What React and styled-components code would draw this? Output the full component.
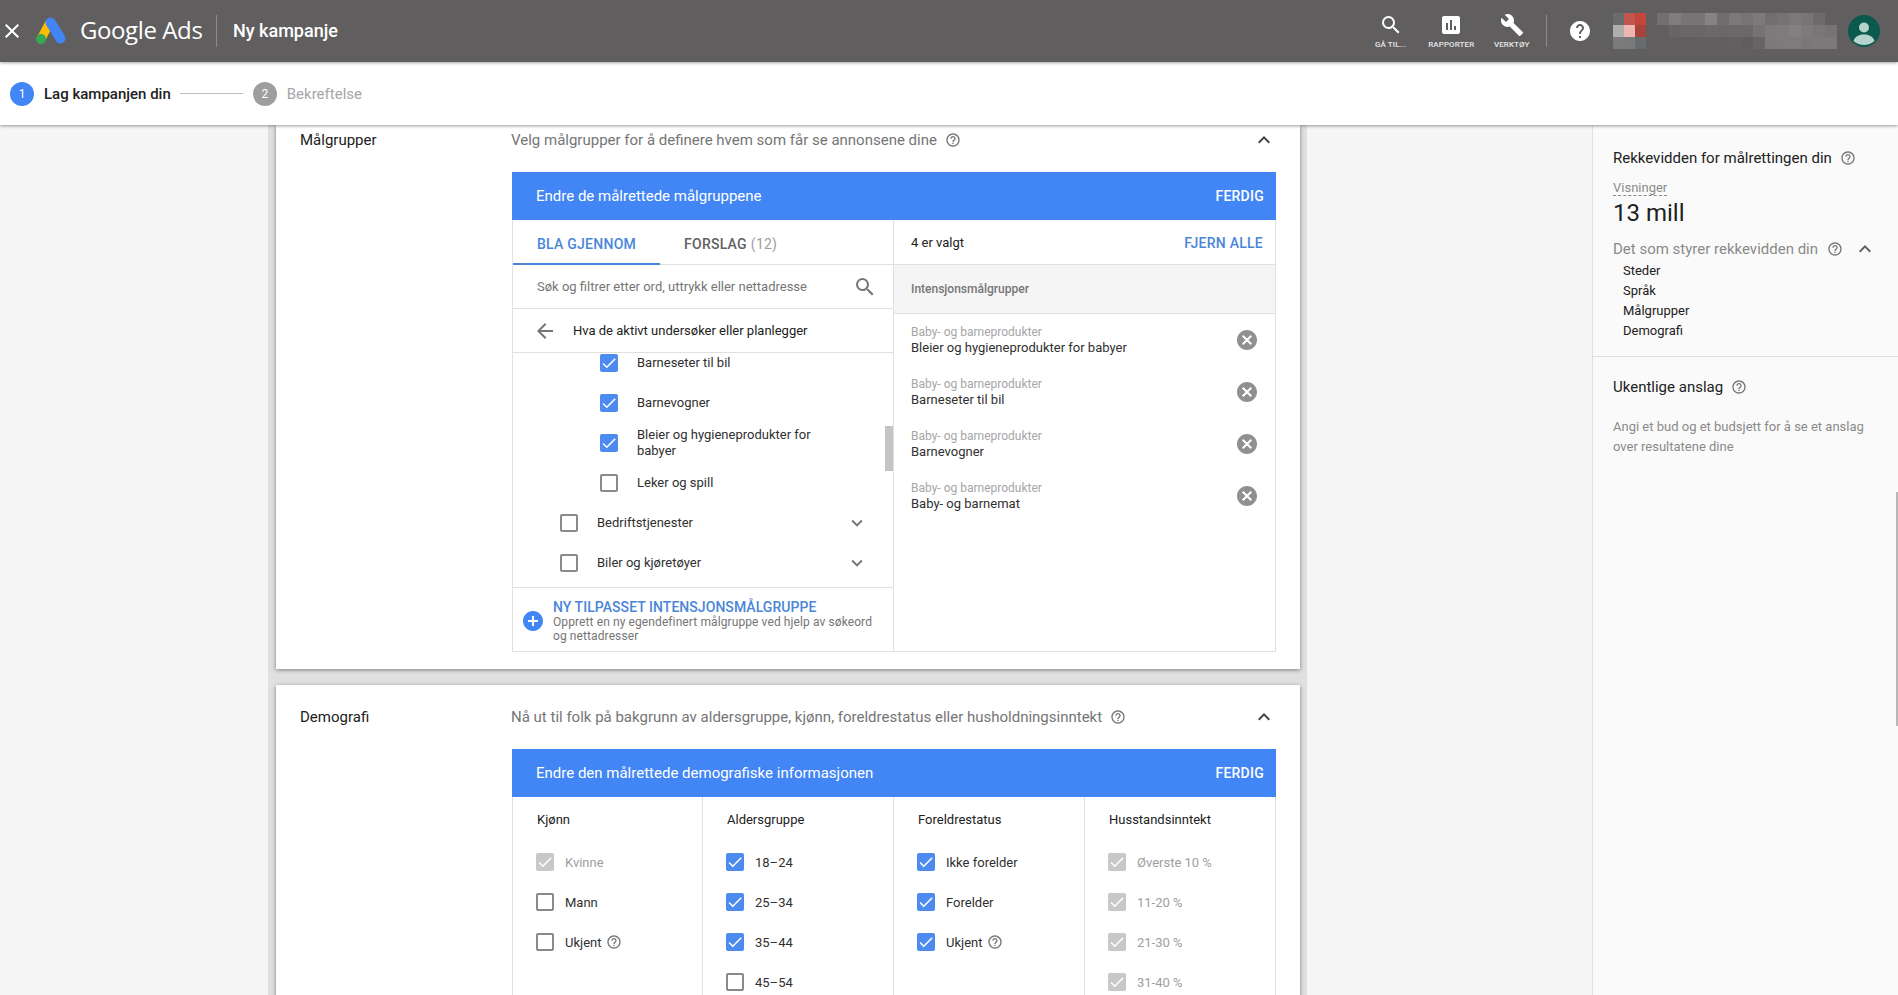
import React from "react";
import styled, { createGlobalStyle } from "styled-components";

const GlobalStyle = createGlobalStyle`
    * { box-sizing: border-box; }
    html, body { margin: 0; height: 100%; overflow: hidden; }
    body {
        font-family: Roboto, "Liberation Sans", sans-serif;
        color: #212121;
        background: #f5f5f5;
    }
`;

const paths = {
    search: "M15.5 14h-.79l-.28-.27A6.471 6.471 0 0 0 16 9.5 6.5 6.5 0 1 0 9.5 16c1.61 0 3.09-.59 4.23-1.57l.27.28v.79l5 4.99L20.49 19l-4.99-5zm-6 0C7.01 14 5 11.99 5 9.5S7.01 5 9.5 5 14 7.01 14 9.5 11.99 14 9.5 14z",
    report: "M19 3H5c-1.1 0-2 .9-2 2v14c0 1.1.9 2 2 2h14c1.1 0 2-.9 2-2V5c0-1.1-.9-2-2-2zM9 17H7v-7h2v7zm4 0h-2V7h2v10zm4 0h-2v-4h2v4z",
    build: "M22.7 19l-9.1-9.1c.9-2.3.4-5-1.5-6.9-2-2-5-2.4-7.4-1.3L9 6 6 9 1.6 4.7C.4 7.1.9 10.1 2.9 12.1c1.9 1.9 4.6 2.4 6.9 1.5l9.1 9.1c.4.4 1 .4 1.4 0l2.3-2.3c.5-.4.5-1.1.1-1.4z",
    helpFilled: "M12 2C6.48 2 2 6.48 2 12s4.48 10 10 10 10-4.48 10-10S17.52 2 12 2zm1 17h-2v-2h2v2zm2.07-7.75l-.9.92C13.45 12.9 13 13.5 13 15h-2v-.5c0-1.1.45-2.1 1.17-2.83l1.24-1.26c.37-.36.59-.86.59-1.41 0-1.1-.9-2-2-2s-2 .9-2 2H8c0-2.21 1.79-4 4-4s4 1.79 4 4c0 .88-.36 1.68-.93 2.25z",
    help: "M11 18h2v-2h-2v2zm1-16C6.48 2 2 6.48 2 12s4.48 10 10 10 10-4.48 10-10S17.52 2 12 2zm0 18c-4.41 0-8-3.59-8-8s3.59-8 8-8 8 3.59 8 8-3.59 8-8 8zm0-14c-2.21 0-4 1.79-4 4h2c0-1.1.9-2 2-2s2 .9 2 2c0 2-3 1.75-3 5h2c0-2.25 3-2.5 3-5 0-2.21-1.79-4-4-4z",
    close: "M19 6.41L17.59 5 12 10.59 6.41 5 5 6.41 10.59 12 5 17.59 6.41 19 12 13.41 17.59 19 19 17.59 13.41 12z",
    back: "M20 11H7.83l5.59-5.59L12 4l-8 8 8 8 1.41-1.41L7.83 13H20v-2z",
    less: "M12 8l-6 6 1.41 1.41L12 10.83l4.59 4.58L18 14z",
    more: "M16.59 8.59L12 13.17 7.41 8.59 6 10l6 6 6-6z",
    check: "M9 16.17L4.83 12l-1.42 1.41L9 19 21 7l-1.41-1.41z",
    cancel: "M12 2C6.47 2 2 6.47 2 12s4.47 10 10 10 10-4.47 10-10S17.53 2 12 2zm5 13.59L15.59 17 12 13.41 8.41 17 7 15.59 10.59 12 7 8.41 8.41 7 12 10.59 15.59 7 17 8.41 13.41 12 17 15.59z",
    addCircle: "M12 2C6.48 2 2 6.48 2 12s4.48 10 10 10 10-4.48 10-10S17.52 2 12 2zm5 11h-4v4h-2v-4H7v-2h4V7h2v4h4v2z",
};

const Icon = ({ name, size = 24, color = "#757575" }) => (
    <IconSvg width={size} height={size} viewBox="0 0 24 24" fill={color}>
        <path d={paths[name]} />
    </IconSvg>
);

const AdsLogo = () => (
    <svg width="32" height="28" viewBox="0 0 32 28">
        <path d="M14 7 6 22" stroke="#fbbc04" strokeWidth="9" strokeLinecap="round" />
        <path d="M15.500 5.500 25.500 21.500" stroke="#4285f4" strokeWidth="10" strokeLinecap="round" />
        <circle cx="6" cy="22" r="5" fill="#34a853" />
    </svg>
);

const Avatar = () => (
    <svg width="32" height="32" viewBox="0 0 32 32">
        <circle cx="16" cy="16" r="16" fill="#0b5a4d" />
        <circle cx="16" cy="12.500" r="5" fill="#b4d3cd" />
        <path d="M5.500 26c1.500-5 6-6.500 10.500-6.500S25 21 26.500 26a16 16 0 0 1-21 0z" fill="#b4d3cd" />
    </svg>
);

// hidden account name and logo, pixelated in the picture
const logoCells = [
    ["#6a6b6c", "#c0564e", "#c4463c"],
    ["#aeaeae", "#eeb6b0", "#a8423b"],
    ["#7b7b7b", "#77797b", "#666b6d"],
];
const nameCells = [
    ["#716f70", "#7f7d7e", "#767475", "#767475", "#858384", "#6f6d6e", "#7a7879", "#757374", "#7b797a", "#706e6f", "#747273", "#7a7879", "#767475", "#6c6a6b", "#605e5f"],
    ["#605e5f", "#666465", "#686667", "#686667", "#6a6869", "#696768", "#6a6869", "#6a6869", "#747273", "#7c7a7b", "#7e7c7d", "#828081", "#7c7a7b", "#787677", "#757374"],
    ["#605e5f", "#615f60", "#605e5f", "#625f60", "#615f60", "#605e5f", "#626061", "#5f5d5e", "#666465", "#7b797a", "#7d7b7c", "#7d7b7c", "#797778", "#7b797a", "#7a7879"],
];

const Mosaic = ({ cells, cell }) => (
    <svg width={cells[0].length * cell} height="36" viewBox={`0 0 ${cells[0].length * cell} 36`}>
        {cells.map((row, y) =>
            row.map((fill, x) => (
                <rect key={`${x}-${y}`} x={x * cell} y={y * 12} width={cell} height="12" fill={fill} />
            ))
        )}
    </svg>
);

const Box = ({ state }) => (
    <CheckBox state={state}>
        {state !== "off" && <Icon name="check" size={18} color="#fff" />}
    </CheckBox>
);

const selected = ["Bleier og hygieneprodukter for babyer", "Barneseter til bil", "Barnevogner", "Baby- og barnemat"];

const demoColumns = [
    {
        title: "Kjønn",
        rows: [
            { label: "Kvinne", state: "locked" },
            { label: "Mann", state: "off" },
            { label: "Ukjent", state: "off", help: true },
        ],
    },
    {
        title: "Aldersgruppe",
        rows: [
            { label: "18–24", state: "on" },
            { label: "25–34", state: "on" },
            { label: "35–44", state: "on" },
            { label: "45–54", state: "off" },
        ],
    },
    {
        title: "Foreldrestatus",
        rows: [
            { label: "Ikke forelder", state: "on" },
            { label: "Forelder", state: "on" },
            { label: "Ukjent", state: "on", help: true },
        ],
    },
    {
        title: "Husstandsinntekt",
        rows: [
            { label: "Øverste 10 %", state: "locked" },
            { label: "11-20 %", state: "locked" },
            { label: "21-30 %", state: "locked" },
            { label: "31-40 %", state: "locked" },
        ],
    },
];

const App = () => {
    return (
        <Page>
            <GlobalStyle />
            <TopBar>
                <CloseButton><Icon name="close" color="#fff" /></CloseButton>
                <LogoWrap><AdsLogo /></LogoWrap>
                <Brand>Google Ads</Brand>
                <BarDivider />
                <PageTitle>Ny kampanje</PageTitle>
                <TopActions>
                    <TopAction>
                        <Icon name="search" color="#fff" />
                        <span>GÅ TIL...</span>
                    </TopAction>
                    <TopAction>
                        <Icon name="report" color="#fff" />
                        <span>RAPPORTER</span>
                    </TopAction>
                    <TopAction>
                        <Icon name="build" color="#fff" />
                        <span>VERKTØY</span>
                    </TopAction>
                    <ActionDivider />
                    <HelpWrap><Icon name="helpFilled" color="#fff" /></HelpWrap>
                    <AccountWrap>
                        <Mosaic cells={logoCells} cell={11} />
                        <Mosaic cells={nameCells} cell={12} />
                    </AccountWrap>
                    <Avatar />
                </TopActions>
            </TopBar>

            <Stepper>
                <StepNum active>1</StepNum>
                <StepLabel active>Lag kampanjen din</StepLabel>
                <StepLine />
                <StepNum>2</StepNum>
                <StepLabel>Bekreftelse</StepLabel>
            </Stepper>

            <Body>
                <Main>
                    <Column>
                        <Card>
                            <CardHead first>
                                <CardName>Målgrupper</CardName>
                                <CardDesc>
                                    Velg målgrupper for å definere hvem som får se annonsene dine
                                    <Icon name="help" size={16} />
                                </CardDesc>
                                <Icon name="less" color="#424242" />
                            </CardHead>
                            <Editor>
                                <EditorBar>
                                    <span>Endre de målrettede målgruppene</span>
                                    <strong>FERDIG</strong>
                                </EditorBar>
                                <SplitPanel>
                                    <LeftPane>
                                        <Tabs>
                                            <Tab active>BLA GJENNOM</Tab>
                                            <Tab>FORSLAG <em>(12)</em></Tab>
                                        </Tabs>
                                        <SearchRow>
                                            <span>Søk og filtrer etter ord, uttrykk eller nettadresse</span>
                                            <Icon name="search" />
                                        </SearchRow>
                                        <BackRow>
                                            <Icon name="back" />
                                            <span>Hva de aktivt undersøker eller planlegger</span>
                                        </BackRow>
                                        <TreeList>
                                            <TreeClip>
                                                <TreeRow level={2}><Box state="on" /><span>Barneseter til bil</span></TreeRow>
                                                <TreeRow level={2}><Box state="on" /><span>Barnevogner</span></TreeRow>
                                                <TreeRow level={2}><Box state="on" /><span>Bleier og hygieneprodukter for babyer</span></TreeRow>
                                                <TreeRow level={2}><Box state="off" /><span>Leker og spill</span></TreeRow>
                                                <TreeRow level={1}>
                                                    <Box state="off" /><span>Bedriftstjenester</span>
                                                    <RowChevron><Icon name="more" size={22} /></RowChevron>
                                                </TreeRow>
                                                <TreeRow level={1}>
                                                    <Box state="off" /><span>Biler og kjøretøyer</span>
                                                    <RowChevron><Icon name="more" size={22} /></RowChevron>
                                                </TreeRow>
                                            </TreeClip>
                                            <ScrollThumb />
                                        </TreeList>
                                        <NewAudience>
                                            <Icon name="addCircle" color="#4285f4" />
                                            <div>
                                                <NewTitle>NY TILPASSET INTENSJONSMÅLGRUPPE</NewTitle>
                                                <NewText>Opprett en ny egendefinert målgruppe ved hjelp av søkeord og nettadresser</NewText>
                                            </div>
                                        </NewAudience>
                                    </LeftPane>
                                    <RightPane>
                                        <PickedHead>
                                            <span>4 er valgt</span>
                                            <strong>FJERN ALLE</strong>
                                        </PickedHead>
                                        <PickedGroup>Intensjonsmålgrupper</PickedGroup>
                                        <div>
                                            {selected.map((name) => (
                                                <PickedItem key={name}>
                                                    <div>
                                                        <small>Baby- og barneprodukter</small>
                                                        <span>{name}</span>
                                                    </div>
                                                    <Icon name="cancel" color="#909090" />
                                                </PickedItem>
                                            ))}
                                        </div>
                                    </RightPane>
                                </SplitPanel>
                            </Editor>
                        </Card>

                        <Card second>
                            <CardHead>
                                <CardName>Demografi</CardName>
                                <CardDesc>
                                    Nå ut til folk på bakgrunn av aldersgruppe, kjønn, foreldrestatus eller husholdningsinntekt
                                    <Icon name="help" size={16} />
                                </CardDesc>
                                <Icon name="less" color="#424242" />
                            </CardHead>
                            <Editor>
                                <EditorBar>
                                    <span>Endre den målrettede demografiske informasjonen</span>
                                    <strong>FERDIG</strong>
                                </EditorBar>
                                <DemoGrid>
                                    {demoColumns.map((col) => (
                                        <DemoCol key={col.title}>
                                            <DemoTitle>{col.title}</DemoTitle>
                                            {col.rows.map((row) => (
                                                <DemoRow key={row.label} locked={row.state === "locked"}>
                                                    <Box state={row.state} />
                                                    <span>{row.label}</span>
                                                    {row.help && <HelpTip><Icon name="help" size={16} /></HelpTip>}
                                                </DemoRow>
                                            ))}
                                        </DemoCol>
                                    ))}
                                </DemoGrid>
                            </Editor>
                        </Card>
                    </Column>
                </Main>

                <Sidebar>
                    <SideBlock>
                        <SideTitle>Rekkevidden for målrettingen din<Icon name="help" size={16} /></SideTitle>
                        <Metric>Visninger</Metric>
                        <MetricValue>13 mill</MetricValue>
                        <Drivers>
                            <span>Det som styrer rekkevidden din</span>
                            <Icon name="help" size={16} />
                            <DriverChevron><Icon name="less" color="#616161" /></DriverChevron>
                        </Drivers>
                        <DriverList>
                            <li>Steder</li>
                            <li>Språk</li>
                            <li>Målgrupper</li>
                            <li>Demografi</li>
                        </DriverList>
                    </SideBlock>
                    <SideBlock last>
                        <SideTitle>Ukentlige anslag<Icon name="help" size={16} /></SideTitle>
                        <SideText>Angi et bud og et budsjett for å se et anslag over resultatene dine</SideText>
                    </SideBlock>
                </Sidebar>
                <PageScroll />
            </Body>
        </Page>
    );
};

const IconSvg = styled.svg`
    flex: none;
    display: block;
`;

const Page = styled.div`
    height: 100vh;
    display: flex;
    flex-direction: column;
    overflow: hidden;
`;

const TopBar = styled.header`
    height: 62px;
    flex: none;
    display: flex;
    align-items: center;
    padding-right: 18px;
    background: #605e5f;
    color: #fff;
    position: relative;
    z-index: 3;
    box-shadow: 0 1px 3px rgba(0, 0, 0, 0.35);
`;

const CloseButton = styled.div`
    width: 24px;
    display: flex;
`;

const LogoWrap = styled.div`
    margin-left: 11px;
    display: flex;
`;

const Brand = styled.div`
    margin-left: 13px;
    padding-bottom: 3px;
    font-family: "Open Sans", Roboto, sans-serif;
    font-size: 24px;
    letter-spacing: -0.4px;
    width: 124px;
    white-space: nowrap;
`;

const BarDivider = styled.div`
    width: 1px;
    height: 32px;
    background: #8b898a;
    margin-left: 12px;
`;

const ActionDivider = styled(BarDivider)`
    margin-left: 4px;
`;

const PageTitle = styled.div`
    margin-left: 16px;
    padding-bottom: 2px;
    font-size: 18px;
    font-weight: 500;
`;

const TopActions = styled.div`
    margin-left: auto;
    display: flex;
    align-items: center;
`;

const TopAction = styled.div`
    width: 60.5px;
    height: 37px;
    display: flex;
    flex-direction: column;
    align-items: center;
    justify-content: space-between;

    & span {
        font-size: 8px;
        font-weight: 500;
        line-height: 10px;
        letter-spacing: 0.1px;
        color: #e6e6e6;
        white-space: nowrap;
    }
`;

const HelpWrap = styled.div`
    margin-left: 21px;
    display: flex;
`;

const AccountWrap = styled.div`
    margin-left: 21px;
    width: 235px;
    display: flex;
    gap: 11px;
`;

const Stepper = styled.div`
    height: 63px;
    flex: none;
    display: flex;
    align-items: center;
    padding-left: 10px;
    background: #fff;
    position: relative;
    z-index: 2;
    box-shadow: 0 1px 3px rgba(0, 0, 0, 0.4);
`;

const StepNum = styled.div`
    width: 24px;
    height: 24px;
    border-radius: 50%;
    display: flex;
    align-items: center;
    justify-content: center;
    font-size: 12px;
    color: #fff;
    background: ${(p) => (p.active ? "#4285f4" : "#9e9e9e")};
`;

const StepLabel = styled.div`
    margin-left: 10px;
    font-size: 15px;
    font-weight: ${(p) => (p.active ? 500 : 400)};
    color: ${(p) => (p.active ? "#212121" : "#a6a6a6")};
`;

const StepLine = styled.div`
    width: 63px;
    height: 1px;
    background: #bdbdbd;
    margin: 0 10px 0 9px;
`;

const Body = styled.div`
    flex: 1;
    min-height: 0;
    display: flex;
    position: relative;
`;

const Main = styled.main`
    width: 1592px;
    flex: none;
    padding-left: 268px;
    overflow: hidden;
`;

const Column = styled.div`
    width: 1039px;
    padding: 0 7px 0 8px;
    background: #e0e0e0;
`;

const Card = styled.section`
    background: #fff;
    margin-top: ${(p) => (p.second ? "16px" : "0")};
    padding: 0 24px 17px;
    box-shadow: 0 1px 4px rgba(0, 0, 0, 0.45);
`;

const CardHead = styled.div`
    height: ${(p) => (p.first ? "47px" : "64px")};
    padding-bottom: ${(p) => (p.first ? "18px" : "0")};
    display: flex;
    align-items: center;
`;

const CardName = styled.div`
    width: 211px;
    font-size: 15px;
`;

const CardDesc = styled.div`
    flex: 1;
    display: flex;
    align-items: center;
    gap: 8px;
    font-size: 15px;
    color: #757575;
`;

const Editor = styled.div`
    margin-left: 212px;
    background: #fff;
`;

const EditorBar = styled.div`
    height: 48px;
    display: flex;
    align-items: center;
    justify-content: space-between;
    padding: 0 12px 0 24px;
    background: #4285f4;
    color: #fff;
    font-size: 15px;

    & strong {
        font-size: 14px;
        font-weight: 500;
        letter-spacing: 0.25px;
    }
`;

const SplitPanel = styled.div`
    height: 432px;
    display: flex;
    border: 1px solid #e0e0e0;
    border-top: 0;
`;

const LeftPane = styled.div`
    width: 381px;
    flex: none;
    display: flex;
    flex-direction: column;
    border-right: 1px solid #e0e0e0;
`;

const Tabs = styled.div`
    height: 45px;
    flex: none;
    display: flex;
    border-bottom: 1px solid #e0e0e0;
`;

const Tab = styled.div`
    height: 45px;
    padding: 4px 24px 0;
    display: flex;
    align-items: center;
    gap: 4px;
    font-size: 14px;
    font-weight: 500;
    letter-spacing: 0.25px;
    color: ${(p) => (p.active ? "#4a86d8" : "#616161")};
    border-bottom: 2px solid ${(p) => (p.active ? "#4a86d8" : "transparent")};

    & em {
        font-style: normal;
        font-weight: 400;
        color: #9e9e9e;
    }
`;

const SearchRow = styled.div`
    height: 44px;
    flex: none;
    display: flex;
    align-items: center;
    justify-content: space-between;
    padding: 0 16px 0 24px;
    border-bottom: 1px solid #e0e0e0;
    font-size: 13px;
    color: #757575;
`;

const BackRow = styled.div`
    height: 44px;
    flex: none;
    display: flex;
    align-items: center;
    gap: 16px;
    padding-left: 20px;
    border-bottom: 1px solid #e0e0e0;
    font-size: 13px;
`;

const TreeList = styled.div`
    height: 234px;
    flex: none;
    position: relative;
    overflow: hidden;
`;

const TreeClip = styled.div`
    margin-top: -10px;
`;

const TreeRow = styled.div`
    height: 40px;
    display: flex;
    align-items: center;
    gap: 19px;
    padding-left: ${(p) => (p.level === 2 ? "87px" : "47px")};
    padding-right: 75px;
    font-size: 13px;
    line-height: 16px;
    color: #303030;
    position: relative;
`;

const RowChevron = styled.div`
    position: absolute;
    right: 25px;
    top: 9px;
    display: flex;
`;

const ScrollThumb = styled.div`
    position: absolute;
    right: 0;
    top: 73px;
    width: 8px;
    height: 45px;
    background: #c4c4c4;
`;

const CheckBox = styled.div`
    width: 18px;
    height: 18px;
    flex: none;
    border-radius: 2px;
    display: flex;
    align-items: center;
    justify-content: center;
    background: ${(p) => (p.state === "on" ? "#4d8bf0" : p.state === "locked" ? "#c8c8c8" : "#fff")};
    border: ${(p) => (p.state === "off" ? "2px solid #8a8a8a" : "0")};
`;

const NewAudience = styled.div`
    flex: 1;
    display: flex;
    align-items: center;
    gap: 8px;
    padding: 3px 12px 0 8px;
    border-top: 1px solid #e0e0e0;
`;

const NewTitle = styled.div`
    font-size: 14px;
    font-weight: 500;
    line-height: 15px;
    letter-spacing: 0.05px;
    color: #4a86d8;
`;

const NewText = styled.div`
    font-size: 12px;
    line-height: 14px;
    color: #757575;
    letter-spacing: 0.1px;
`;

const RightPane = styled.div`
    flex: 1;
    display: flex;
    flex-direction: column;
`;

const PickedHead = styled.div`
    height: 45px;
    flex: none;
    display: flex;
    align-items: center;
    justify-content: space-between;
    padding: 0 12px 0 17px;
    border-bottom: 1px solid #e0e0e0;
    font-size: 13px;

    & strong {
        margin-top: 1px;
        font-size: 14px;
        font-weight: 500;
        letter-spacing: 0.25px;
        color: #4a86d8;
    }
`;

const PickedGroup = styled.div`
    height: 49px;
    flex: none;
    display: flex;
    align-items: center;
    padding-left: 17px;
    background: #f5f5f5;
    border-bottom: 1px solid #e0e0e0;
    font-size: 12px;
    font-weight: 500;
    color: #757575;
`;

const PickedItem = styled.div`
    height: 52px;
    display: flex;
    align-items: center;
    justify-content: space-between;
    padding: 0 16px 0 17px;

    & small, & span {
        display: block;
    }

    & small {
        font-size: 12px;
        line-height: 16px;
        color: #a6a6a6;
    }

    & span {
        font-size: 13px;
        line-height: 16px;
        color: #303030;
    }
`;

const DemoGrid = styled.div`
    display: grid;
    grid-template-columns: 190px 191px 191px 1fr;
    height: 200px;
    border: 1px solid #e0e0e0;
    border-top: 0;
`;

const DemoCol = styled.div`
    padding: 0 0 0 23px;
    border-right: 1px solid #e0e0e0;

    &:last-child {
        border-right: 0;
    }
`;

const DemoTitle = styled.div`
    height: 45px;
    display: flex;
    align-items: center;
    padding-left: 1px;
    font-size: 13px;
`;

const DemoRow = styled.div`
    height: 40px;
    display: flex;
    align-items: center;
    gap: 11px;
    font-size: 13px;
    color: ${(p) => (p.locked ? "#9e9e9e" : "#303030")};
`;

const HelpTip = styled.div`
    margin-left: -6px;
    display: flex;
`;

const Sidebar = styled.aside`
    flex: 1;
    min-width: 0;
    background: #fafafa;
    border-left: 1px solid #e0e0e0;
`;

const SideBlock = styled.div`
    padding: ${(p) => (p.last ? "18px" : "21px")} ${(p) => (p.last ? "21px" : "0")} 0 20px;
    height: ${(p) => (p.last ? "auto" : "232px")};
    border-bottom: ${(p) => (p.last ? "0" : "1px solid #e0e0e0")};
`;

const SideTitle = styled.div`
    display: flex;
    align-items: center;
    gap: 8px;
    height: 24px;
    font-size: 15px;
`;

const Metric = styled.div`
    display: inline-block;
    margin-top: 10px;
    font-size: 13px;
    line-height: 15px;
    color: #8a8a8a;
    border-bottom: 1px dashed #8a8a8a;
`;

const MetricValue = styled.div`
    margin-top: 2px;
    font-size: 24px;
    line-height: 30px;
    color: #212121;
`;

const Drivers = styled.div`
    margin-top: 9px;
    height: 24px;
    display: flex;
    align-items: center;
    gap: 9px;
    font-size: 15px;
    color: #8a8a8a;
    white-space: nowrap;
`;

const DriverChevron = styled.div`
    margin-left: 1px;
    display: flex;
`;

const DriverList = styled.ul`
    list-style: none;
    margin: 0;
    padding: 0 0 0 10px;
    font-size: 13px;
    line-height: 20px;
`;

const SideText = styled.p`
    margin: 18px 0 0;
    font-size: 13px;
    line-height: 20px;
    color: #8a8a8a;
`;

const PageScroll = styled.div`
    position: absolute;
    right: 0;
    top: 367px;
    width: 2px;
    height: 234px;
    background: #b8b8b8;
`;

export default App;
